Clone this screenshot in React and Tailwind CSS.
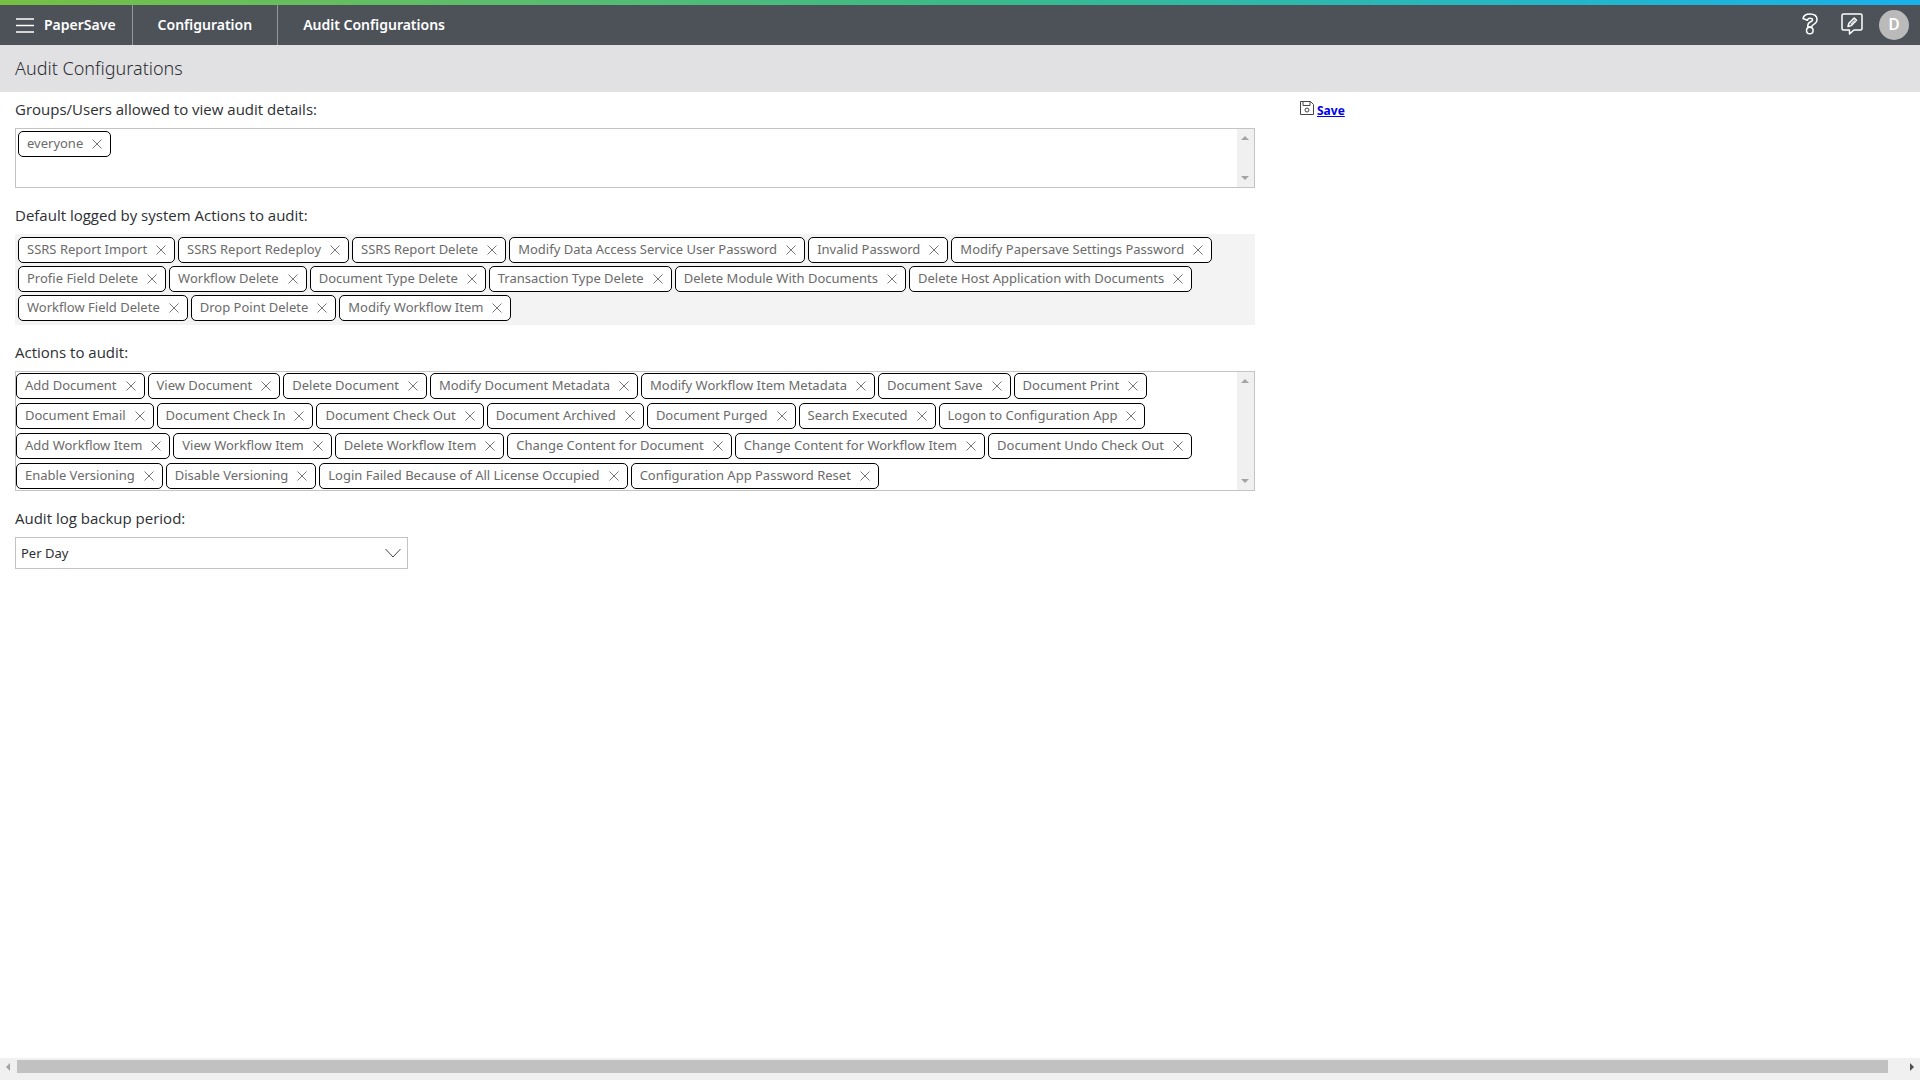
import React from 'react';

const groups = ['everyone'];

const systemActions = [
    'SSRS Report Import', 'SSRS Report Redeploy', 'SSRS Report Delete',
    'Modify Data Access Service User Password', 'Invalid Password', 'Modify Papersave Settings Password',
    'Profie Field Delete', 'Workflow Delete', 'Document Type Delete', 'Transaction Type Delete',
    'Delete Module With Documents', 'Delete Host Application with Documents',
    'Workflow Field Delete', 'Drop Point Delete', 'Modify Workflow Item',
];

const auditActions = [
    'Add Document', 'View Document', 'Delete Document', 'Modify Document Metadata',
    'Modify Workflow Item Metadata', 'Document Save', 'Document Print',
    'Document Email', 'Document Check In', 'Document Check Out', 'Document Archived',
    'Document Purged', 'Search Executed', 'Logon to Configuration App',
    'Add Workflow Item', 'View Workflow Item', 'Delete Workflow Item', 'Change Content for Document',
    'Change Content for Workflow Item', 'Document Undo Check Out',
    'Enable Versioning', 'Disable Versioning', 'Login Failed Because of All License Occupied',
    'Configuration App Password Reset',
];

function Chip({ label }) {
    return (
        <li className="flex h-[26px] items-center gap-[9px] rounded-[5px] border border-black bg-white px-2 text-[13px] text-[#6b6b6b]">
            <span className="whitespace-nowrap pb-[2px] leading-5">{label}</span>
            <button type="button" aria-label={`Remove ${label}`} className="text-[#777]">
                <svg width="10" height="10" viewBox="0 0 10 10" stroke="currentColor" fill="none">
                    <path d="M0.5 0.5 9.5 9.5M9.5 0.5 0.5 9.5" />
                </svg>
            </button>
        </li>
    );
}

function ChipList({ items, labelledBy, className = '' }) {
    return (
        <ul aria-labelledby={labelledBy} className={`flex flex-1 flex-wrap content-start gap-x-[3px] ${className}`}>
            {items.map((item) => <Chip key={item} label={item} />)}
        </ul>
    );
}

function ScrollTrack() {
    return (
        <div aria-hidden="true" className="flex w-[17px] shrink-0 flex-col items-center justify-between bg-[#f0f0f0] py-[7px] text-[#a3a3a3]">
            <svg width="8" height="4" viewBox="0 0 8 4" fill="currentColor"><path d="M4 0 8 4H0z" /></svg>
            <svg width="8" height="4" viewBox="0 0 8 4" fill="currentColor"><path d="M0 0H8L4 4z" /></svg>
        </div>
    );
}

function HelpIcon() {
    return (
        <svg width="16" height="22" viewBox="0 0 16 22" fill="none" stroke="currentColor" strokeWidth="1.5" strokeLinejoin="round">
            <path d="M1 5.500C1.600 2.600 4.300 1 7.800 1 12 1 15 3 15 6.600c0 2.800-1.700 4.100-3.600 5-1.200.6-1.600 1-1.600 2.400H5.800c-.3-2.800.7-4.200 2.800-5.200 1.300-.6 1.900-1.100 1.900-1.900 0-1-1-1.600-2.500-1.600-1.300 0-2.200.6-2.600 1.900z" />
            <circle cx="7.800" cy="17.500" r="3.300" />
        </svg>
    );
}

function FeedbackIcon() {
    return (
        <svg width="22" height="22" viewBox="0 0 22 22" fill="none" stroke="currentColor" strokeWidth="1.5" strokeLinejoin="round">
            <path d="M2.500 1h17A1.500 1.500 0 0 1 21 2.500v13a1.500 1.500 0 0 1-1.500 1.500H13l-4.500 4V17h-6A1.500 1.500 0 0 1 1 15.500v-13A1.500 1.500 0 0 1 2.500 1z" />
            <path d="m7 13.500.9-3.200 5.300-5.300 2.300 2.300-5.300 5.300z" />
            <path d="m9.500 11.200 4-4" strokeWidth="1" />
        </svg>
    );
}

function SaveIcon() {
    return (
        <svg width="14" height="14" viewBox="0 0 14 14" fill="none" stroke="#444" strokeWidth="1">
            <path d="M.5 .5h10l3 3v10H.5z" />
            <path d="M3 .5v4h7v-4" />
            <circle cx="7" cy="9" r="2" />
        </svg>
    );
}

export default function App() {
    return (
        <div className="flex min-h-screen flex-col bg-white font-['Noto_Sans',sans-serif] text-[#2d2f33]">
            <div className="h-[5px] bg-linear-to-r from-[#75c043] via-[#3aba88] to-[#19b1ec]" />

            {/* Top navigation */}
            <header className="flex h-10 items-center justify-between bg-[#4d5259] text-[14px] font-semibold text-white">
                <nav className="flex h-full items-center">
                    <a href="#home" className="flex h-full items-center gap-[10px] border-r border-[#94979b] px-4">
                        <svg width="18" height="15" viewBox="0 0 18 15" stroke="currentColor" strokeWidth="1.4">
                            <path d="M0 1h18M0 7.500h18M0 14h18" />
                        </svg>
                        <span className="pb-[2px]">PaperSave</span>
                    </a>
                    <a href="#configuration" className="flex h-full items-center border-r border-[#94979b] px-[25px] pb-[2px]">Configuration</a>
                    <a href="#audit" className="flex h-full items-center px-[25px] pb-[2px]">Audit Configurations</a>
                </nav>
                <div className="flex items-center pr-[11px]">
                    <button type="button" aria-label="Help" className="pb-[2px]"><HelpIcon /></button>
                    <button type="button" aria-label="Feedback" className="ml-[23px] pb-[2px]"><FeedbackIcon /></button>
                    <button type="button" aria-label="Account" className="ml-4 flex size-[30px] items-center justify-center rounded-full bg-[#bababa] font-['Roboto',sans-serif] text-[17px] font-medium">D</button>
                </div>
            </header>

            <div className="flex h-[47px] items-center bg-[#e1e1e3] px-[15px]">
                <h1 className="text-[18px] font-light">Audit Configurations</h1>
            </div>

            <main className="flex flex-1 items-start">
                <section className="w-2/3 pl-[15px] pr-[25px] pt-[7px]">
                    <h2 id="groups" className="font-['Open_Sans',sans-serif] text-[15px] leading-5">Groups/Users allowed to view audit details:</h2>
                    <div className="mt-[9px] flex h-[60px] border border-[#c4c4c4]">
                        <ChipList items={groups} labelledBy="groups" className="p-[2px]" />
                        <ScrollTrack />
                    </div>

                    <h2 id="system" className="mt-[17px] font-['Open_Sans',sans-serif] text-[15px] leading-5">Default logged by system Actions to audit:</h2>
                    <div className="mt-[9px] flex bg-[#f3f3f3]">
                        <ChipList items={systemActions} labelledBy="system" className="gap-y-[3px] px-[3px] pb-1 pt-[3px]" />
                    </div>

                    <h2 id="actions" className="mt-[17px] font-['Open_Sans',sans-serif] text-[15px] leading-5">Actions to audit:</h2>
                    <div className="mt-[9px] flex border border-[#c4c4c4]">
                        <ChipList items={auditActions} labelledBy="actions" className="gap-y-1 py-px" />
                        <ScrollTrack />
                    </div>

                    <label htmlFor="period" className="mt-[17px] block font-['Open_Sans',sans-serif] text-[15px] leading-5">Audit log backup period:</label>
                    <div className="relative mt-[9px] w-[393px]">
                        <select id="period" className="h-8 w-full appearance-none border border-[#c4c4c4] bg-white pl-[5px] pr-8 pt-[2px] text-[13px]">
                            <option>Per Day</option>
                            <option>Per Week</option>
                            <option>Per Month</option>
                        </select>
                        <svg className="pointer-events-none absolute right-[7px] top-[11px]" width="16" height="10" viewBox="0 0 16 10" fill="none" stroke="#444">
                            <path d="m.5 1 7.500 8 7.500-8" />
                        </svg>
                    </div>
                </section>

                <aside className="flex items-start gap-[3px] pl-5 pt-[9px]">
                    <SaveIcon />
                    <a href="#save" className="text-[12px] font-bold leading-5 text-[#0000ee] underline">Save</a>
                </aside>
            </main>

            {/* Horizontal page scroll */}
            <div aria-hidden="true" className="flex h-[22px] items-center gap-[7px] bg-[#f0f0f0] px-[6px] pb-[7px] pt-[2px]">
                <svg width="4" height="8" viewBox="0 0 4 8" fill="#a3a3a3"><path d="M4 0v8L0 4z" /></svg>
                <div className="mr-[15px] h-[13px] flex-1 bg-[#c1c1c1]" />
                <svg width="4" height="8" viewBox="0 0 4 8" fill="#505050"><path d="M0 0v8l4-4z" /></svg>
            </div>
        </div>
    );
}
